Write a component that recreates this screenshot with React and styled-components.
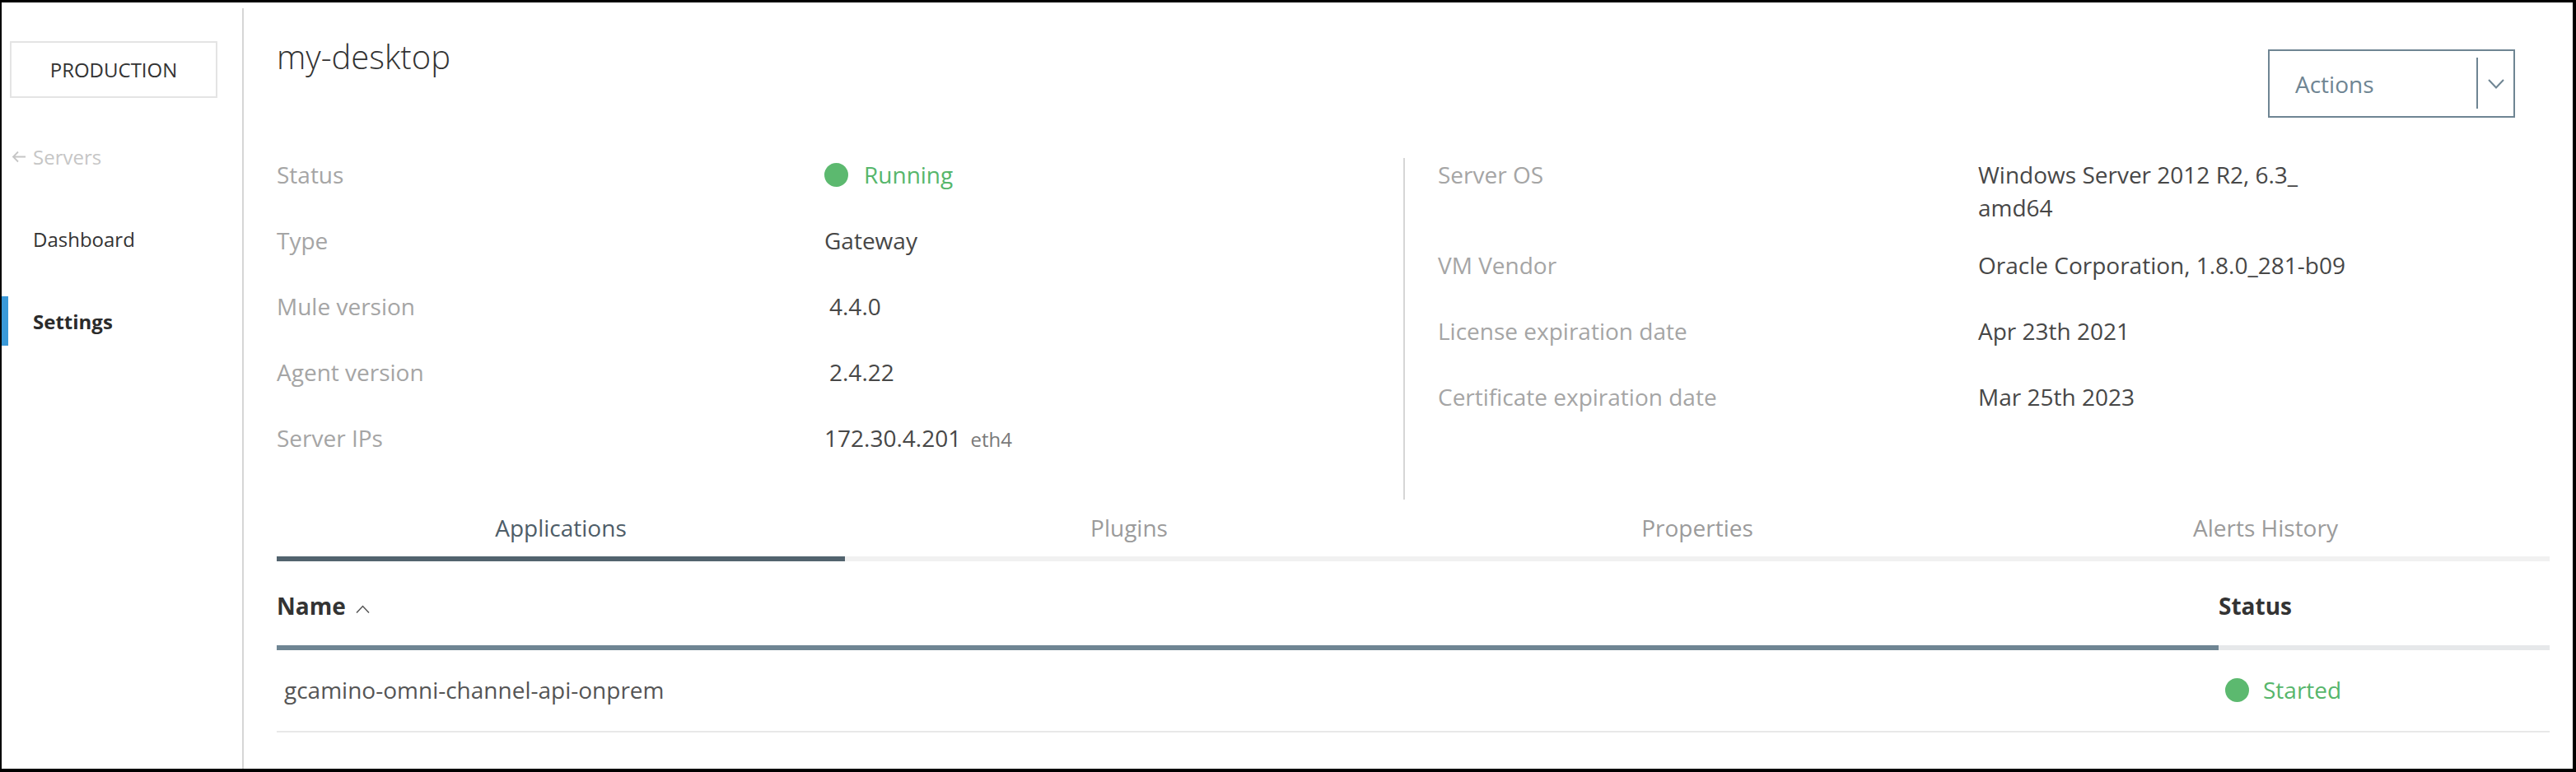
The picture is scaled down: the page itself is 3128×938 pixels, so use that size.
import React from 'react';
import styled, { createGlobalStyle } from 'styled-components';

const GlobalStyle = createGlobalStyle`
  html, body { margin: 0; padding: 0; background: #fff; }
  body { font-family: "Open Sans", "Noto Sans", sans-serif; color: #333; }
  * { box-sizing: border-box; }
`;

const Frame = styled.div`
  width: 3128px; height: 938px;
  border-style: solid; border-color: #000;
  border-width: 3px 4px 4px 2px;
  display: flex; background: #fff; overflow: hidden;
`;

/* sidebar */
const Sidebar = styled.aside`
  width: 294px; flex-shrink: 0;
  margin-top: 7px; padding-top: 40px;
  border-right: 2px solid #d6d6d6;
`;
const EnvBox = styled.div`
  margin-left: 10px; width: 252px; height: 69px;
  border: 2px solid #e4e4e4;
  display: flex; align-items: center; justify-content: center;
  font-size: 24px; color: #333;
`;
const Nav = styled.nav`
  margin-top: 41px;
  display: flex; flex-direction: column; gap: 40px;
`;
const BackLink = styled.a`
  height: 60px; display: flex; align-items: center; gap: 8px;
  padding-left: 12px;
  font-size: 24px; color: #c6c6c6; text-decoration: none;
`;
const NavItem = styled.a`
  height: 60px; display: flex; align-items: center;
  padding-left: 30px;
  border-left: 8px solid ${p => (p.$active ? '#3a99d8' : 'transparent')};
  font-size: 24px; text-decoration: none;
  font-weight: ${p => (p.$active ? 700 : 400)};
  color: ${p => (p.$active ? '#2b2b2b' : '#333')};
`;

/* main */
const Main = styled.main`
  flex: 1; min-width: 0;
  padding: 0 28px 0 40px;
`;
const Header = styled.header`
  display: flex; justify-content: space-between; align-items: flex-start;
`;
const Title = styled.h1`
  margin: 39px 0 0;
  font-size: 40px; line-height: 54px; font-weight: 300; color: #333;
`;
const ActionsButton = styled.button`
  margin: 57px 42px 0 0;
  width: 300px; height: 83px; padding: 0;
  border: 2px solid #6f8593; background: #fff;
  display: flex; align-items: stretch;
  font-family: inherit; cursor: pointer;
`;
const ActionsLabel = styled.span`
  flex: 1; display: flex; align-items: center;
  padding-left: 31px;
  font-size: 28px; color: #6f8593;
`;
const ActionsDivider = styled.span`
  width: 2px; margin: 8px 0 9px; background: #6f8593;
`;
const ActionsCaret = styled.span`
  width: 43px; display: flex; align-items: center; justify-content: center;
`;

const Info = styled.section`
  margin-top: 49px;
  display: flex; align-items: stretch;
`;
const InfoColumn = styled.div`
  padding-bottom: 13px;
  ${p => (p.$right
    ? 'flex: 1; border-left: 2px solid #d6d6d6; padding-left: 40px;'
    : 'width: 1368px;')}
`;
const InfoRow = styled.div`
  display: grid;
  grid-template-columns: ${p => p.$labelWidth}px 1fr;
  font-size: 28px; line-height: 40px;
  padding-bottom: ${p => p.$gap || 40}px;
`;
const Label = styled.div`
  color: #a5a5a5;
`;
const Value = styled.div`
  color: #474747;
  padding-left: ${p => p.$indent || 0}px;
`;
const Small = styled.span`
  font-size: 24px; color: #7a7a7a; margin-left: 4px;
`;
const StatusValue = styled.div`
  display: flex; align-items: center; gap: ${p => p.$gap || 19}px;
  color: #56b66b;
  padding-left: ${p => p.$indent || 0}px;
`;
const Dot = styled.span`
  width: 29px; height: 29px; border-radius: 50%;
  background: #5cb96f; flex-shrink: 0;
`;

/* tabs */
const Tabs = styled.div`
  display: grid; grid-template-columns: repeat(4, 1fr);
`;
const Tab = styled.button`
  padding: 14px 0 15px; margin: 0;
  border: 0; border-bottom: 6px solid ${p => (p.$active ? '#52636e' : '#f1f1f1')};
  background: none; font-family: inherit;
  font-size: 28px; line-height: 40px;
  color: ${p => (p.$active ? '#4e5d68' : '#9b9b9b')};
`;

/* table */
const Table = styled.div`
  display: grid; grid-template-columns: 2358px 1fr;
`;
const HeadCell = styled.div`
  display: flex; align-items: center;
  padding: 34px 0 28px;
  font-size: 28px; line-height: 40px; font-weight: 700; color: #333;
  border-bottom: 6px solid ${p => (p.$sorted ? '#6f8593' : '#e6e8ea')};
`;
const SortCaret = styled.svg`
  margin-left: 12px; margin-top: 8px;
`;
const Cell = styled.div`
  padding: 28px 0 30px ${p => p.$pad || 0}px;
  font-size: 28px; line-height: 40px; color: #555;
  border-bottom: 2px solid #e8e8e8;
`;

const leftRows = [
  { label: 'Status', status: 'Running' },
  { label: 'Type', value: 'Gateway' },
  { label: 'Mule version', value: '4.4.0', indent: 6 },
  { label: 'Agent version', value: '2.4.22', indent: 6 },
  { label: 'Server IPs', value: '172.30.4.201', extra: 'eth4' },
];

const rightRows = [
  { label: 'Server OS', value: ['Windows Server 2012 R2, 6.3_', 'amd64'], gap: 30 },
  { label: 'VM Vendor', value: 'Oracle Corporation, 1.8.0_281-b09' },
  { label: 'License expiration date', value: 'Apr 23th 2021' },
  { label: 'Certificate expiration date', value: 'Mar 25th 2023' },
];

const tabs = ['Applications', 'Plugins', 'Properties', 'Alerts History'];

const renderValue = row => {
  if (row.status) {
    return (
      <StatusValue>
        <Dot />
        {row.status}
      </StatusValue>
    );
  }
  const text = Array.isArray(row.value)
    ? row.value.map((v, i) => (
        <React.Fragment key={i}>
          {i > 0 && <br />}
          {v}
        </React.Fragment>
      ))
    : row.value;
  return (
    <Value $indent={row.indent}>
      {text}
      {row.extra && <> <Small>{row.extra}</Small></>}
    </Value>
  );
};

const App = () => {
  return (
    <>
      <GlobalStyle />
      <Frame>
        <Sidebar>
          <EnvBox>PRODUCTION</EnvBox>
          <Nav>
            <BackLink>
              <svg width="18" height="15" viewBox="0 0 18 15" fill="none" stroke="#c6c6c6" strokeWidth="1.8">
                <path d="M17 7.5H2M8 1.5l-6 6 6 6" />
              </svg>
              Servers
            </BackLink>
            <NavItem>Dashboard</NavItem>
            <NavItem $active>Settings</NavItem>
          </Nav>
        </Sidebar>

        <Main>
          <Header>
            <Title>my-desktop</Title>
            <ActionsButton>
              <ActionsLabel>Actions</ActionsLabel>
              <ActionsDivider />
              <ActionsCaret>
                <svg width="20" height="12" viewBox="0 0 20 12" fill="none" stroke="#6f8593" strokeWidth="2">
                  <path d="M1 1l9 9.5L19 1" />
                </svg>
              </ActionsCaret>
            </ActionsButton>
          </Header>

          <Info>
            <InfoColumn>
              {leftRows.map(row => (
                <InfoRow key={row.label} $labelWidth={665}>
                  <Label>{row.label}</Label>
                  {renderValue(row)}
                </InfoRow>
              ))}
            </InfoColumn>
            <InfoColumn $right>
              {rightRows.map(row => (
                <InfoRow key={row.label} $labelWidth={656} $gap={row.gap}>
                  <Label>{row.label}</Label>
                  {renderValue(row)}
                </InfoRow>
              ))}
            </InfoColumn>
          </Info>

          <Tabs>
            {tabs.map((t, i) => (
              <Tab key={t} $active={i === 0}>{t}</Tab>
            ))}
          </Tabs>

          <Table>
            <HeadCell $sorted>
              Name
              <SortCaret width="17" height="10" viewBox="0 0 17 10" fill="none" stroke="#555" strokeWidth="1.5">
                <path d="M1 9.5L8.5 1.5 16 9.5" />
              </SortCaret>
            </HeadCell>
            <HeadCell>Status</HeadCell>
            <Cell $pad={9}>gcamino-omni-channel-api-onprem</Cell>
            <Cell $pad={8}>
              <StatusValue $gap={17}>
                <Dot />
                Started
              </StatusValue>
            </Cell>
          </Table>
        </Main>
      </Frame>
    </>
  );
};

export default App;
